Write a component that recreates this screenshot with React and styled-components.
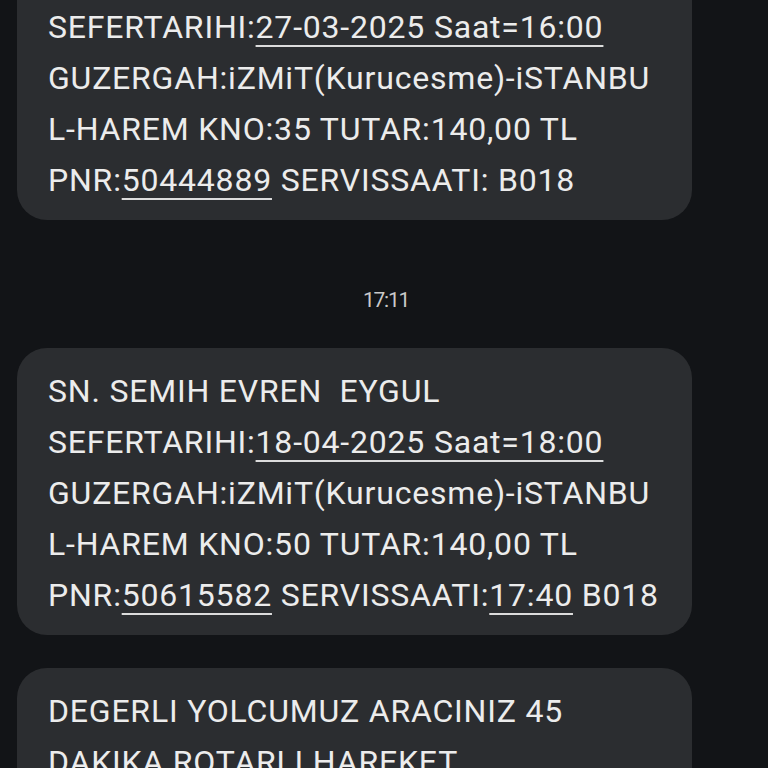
import React from "react";
import styled, { createGlobalStyle } from "styled-components";

const GlobalStyle = createGlobalStyle`
  html, body {
    margin: 0;
    padding: 0;
    background: #121417;
    overflow: hidden;
  }
  body {
    font-family: Roboto, "Noto Sans", "Liberation Sans", sans-serif;
  }
`;

const Screen = styled.div`
  width: 768px;
  height: 768px;
  overflow: hidden;
  background: #121417;
`;

// the thread is scrolled: first bubble starts above the viewport
const Thread = styled.div`
  display: flex;
  flex-direction: column;
  align-items: flex-start;
  padding: 0 17px;
  margin-top: -67px;
`;

const Bubble = styled.div`
  width: 675px;
  box-sizing: border-box;
  background: #2b2d30;
  border-radius: 30px;
  padding: 18px 20px 14px 31px;
  margin-bottom: ${(p) => p.$gap ?? 33}px;
  color: #ececec;
  font-size: 32px;
  line-height: 51px;
  letter-spacing: 0.8px;
`;

const Line = styled.div`
  white-space: nowrap;
`;

const Link = styled.span`
  text-decoration: underline;
  text-decoration-thickness: 2px;
  text-underline-offset: 7px;
  text-decoration-color: #dcdcdc;
`;

const TimeStamp = styled.div`
  width: 100%;
  text-align: center;
  padding-left: 4px;
  box-sizing: border-box;
  color: #c9c9c9;
  font-size: 21px;
  letter-spacing: -1.3px;
  line-height: 24px;
  margin: 68px 0 36px;
`;

const messages = [
  {
    lines: [
      ["SN. SEMIH EVREN\u00a0\u00a0EYGUL"],
      ["SEFERTARIHI:", { link: "27-03-2025 Saat=16:00" }],
      ["GUZERGAH:iZMiT(Kurucesme)-iSTANBU"],
      ["L-HAREM KNO:35 TUTAR:140,00 TL"],
      ["PNR:", { link: "50444889" }, " SERVISSAATI: B018"],
    ],
  },
  { time: "17:11" },
  {
    lines: [
      ["SN. SEMIH EVREN\u00a0\u00a0EYGUL"],
      ["SEFERTARIHI:", { link: "18-04-2025 Saat=18:00" }],
      ["GUZERGAH:iZMiT(Kurucesme)-iSTANBU"],
      ["L-HAREM KNO:50 TUTAR:140,00 TL"],
      ["PNR:", { link: "50615582" }, " SERVISSAATI:", { link: "17:40" }, " B018"],
    ],
  },
  {
    lines: [
      ["DEGERLI YOLCUMUZ ARACINIZ 45"],
      ["DAKIKA ROTARLI HAREKET"],
      ["EDECEKTIR. ANLAYISINIZ ICIN"],
      ["TESEKKUR EDERIZ"],
    ],
  },
];

export default function App() {
  return (
    <Screen>
      <GlobalStyle />
      <Thread>
        {messages.map((m, i) => {
          if (m.time) return <TimeStamp key={i}>{m.time}</TimeStamp>;
          const nextIsTime = messages[i + 1] && messages[i + 1].time;
          return (
            <Bubble key={i} $gap={nextIsTime ? 0 : 33}>
              {m.lines.map((parts, j) => (
                <Line key={j}>
                  {parts.map((p, k) =>
                    typeof p === "string" ? p : <Link key={k}>{p.link}</Link>
                  )}
                </Line>
              ))}
            </Bubble>
          );
        })}
      </Thread>
    </Screen>
  );
}
